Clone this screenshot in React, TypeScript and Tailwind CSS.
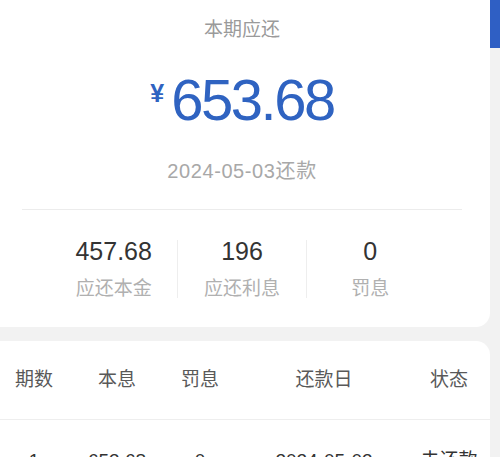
import React from "react";

const font = { fontFamily: '"Liberation Sans", "Noto Sans CJK SC", sans-serif' };

export default function App() {
  const cols = "grid grid-cols-[68px_98px_68px_180px_70px]";
  return (
    <div className="w-[500px] h-[457px] overflow-hidden bg-[#f2f2f2]" style={font}>
      <div className="flex">
        <div className="w-[490px] bg-white rounded-br-[14px] pl-[22px] pr-[28px] flex flex-col items-center">
          <div className="mt-[18px] text-[19px] leading-[24px] text-[#9a9a9a]">本期应还</div>
          <div className="mt-[26px] flex items-start text-[#2f63c1] h-[64px]">
            <span className="text-[25px] leading-[24px] mt-[13px] mr-[7px] font-bold">¥</span>
            <span className="text-[58px] leading-[64px] tracking-[-2.5px]">653.68</span>
          </div>
          <div className="mt-[27px] text-[20px] leading-[24px] text-[#a8a8a8] tracking-[0.6px]">2024-05-03还款</div>
          <div className="mt-[26px] w-full h-px bg-[#ececec]"></div>
          <div className="mt-[27px] mb-[26px] w-full flex justify-center">
            <div className="flex w-[384px]">
              <div className="flex-1 flex flex-col items-center">
                <div className="text-[25px] leading-[28px] text-[#333]">457.68</div>
                <div className="mt-[12px] text-[19px] leading-[24px] text-[#b0b0b0]">应还本金</div>
              </div>
              <div className="w-px bg-[#eeeeee] my-[3px]"></div>
              <div className="flex-1 flex flex-col items-center">
                <div className="text-[25px] leading-[28px] text-[#333]">196</div>
                <div className="mt-[12px] text-[19px] leading-[24px] text-[#b0b0b0]">应还利息</div>
              </div>
              <div className="w-px bg-[#eeeeee] my-[3px]"></div>
              <div className="flex-1 flex flex-col items-center">
                <div className="text-[25px] leading-[28px] text-[#333]">0</div>
                <div className="mt-[12px] text-[19px] leading-[24px] text-[#b0b0b0]">罚息</div>
              </div>
            </div>
          </div>
        </div>
        <div className="w-[10px]">
          <div className="h-[48px] bg-[#2f5fc4]"></div>
        </div>
      </div>
      <div className="mt-[14px] w-[490px] bg-white rounded-tr-[14px]">
        <div className={`${cols} h-[79px] items-center text-[19px] text-[#595959] border-b border-[#eeeeee]`}>
          <div className="text-center">期数</div>
          <div className="text-center">本息</div>
          <div className="text-center">罚息</div>
          <div className="text-center">还款日</div>
          <div className="text-center">状态</div>
        </div>
        <div className={`${cols} h-[82px] items-center text-[19px] text-[#333]`}>
          <div className="text-center">1</div>
          <div className="text-center">653.68</div>
          <div className="text-center">0</div>
          <div className="text-center">2024-05-03</div>
          <div className="text-center">未还款</div>
        </div>
      </div>
    </div>
  );
}
